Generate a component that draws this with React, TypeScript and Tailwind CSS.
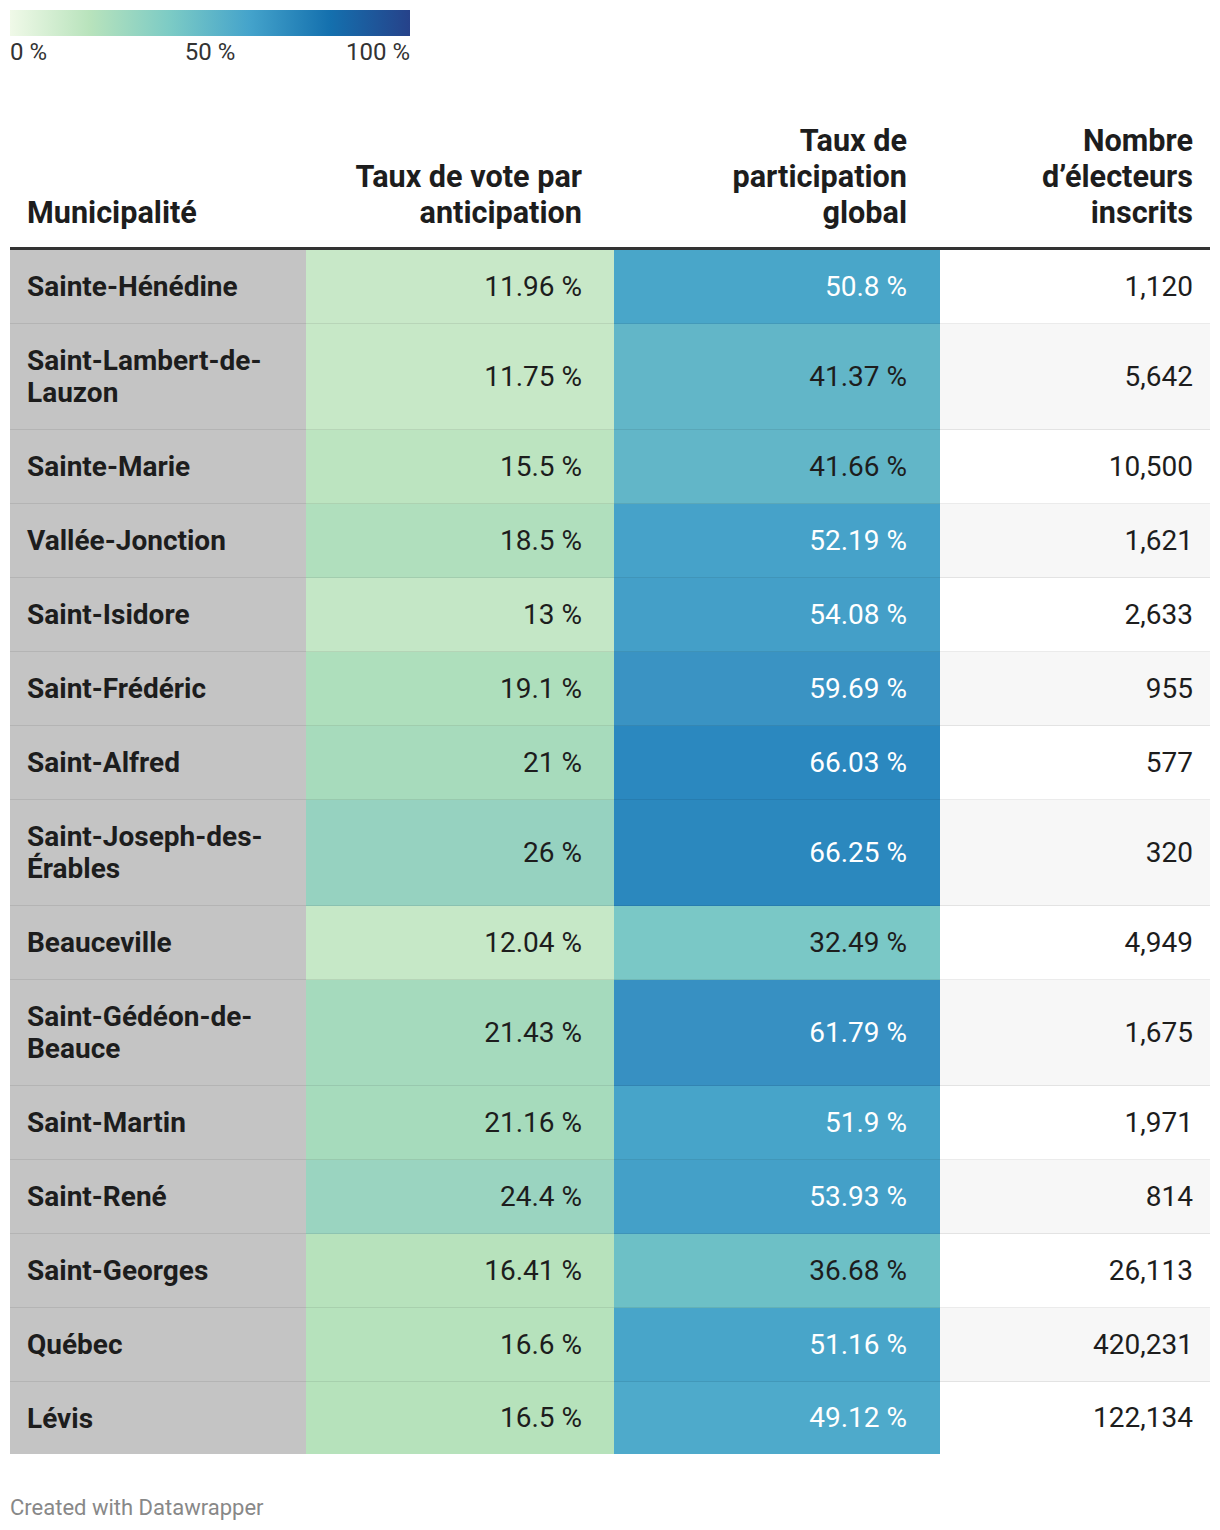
const rows = [
  { name: 'Sainte-Hénédine', vote: '11.96 %', voteBg: 'bg-[#c8e8c8]', part: '50.8 %', partBg: 'bg-[#49a6c9]', light: true, n: '1,120' },
  { name: 'Saint-Lambert-de-\nLauzon', vote: '11.75 %', voteBg: 'bg-[#c7e8c7]', part: '41.37 %', partBg: 'bg-[#62b6c8]', light: false, n: '5,642' },
  { name: 'Sainte-Marie', vote: '15.5 %', voteBg: 'bg-[#bce4c0]', part: '41.66 %', partBg: 'bg-[#62b6c8]', light: false, n: '10,500' },
  { name: 'Vallée-Jonction', vote: '18.5 %', voteBg: 'bg-[#b0dfbd]', part: '52.19 %', partBg: 'bg-[#46a2c9]', light: true, n: '1,621' },
  { name: 'Saint-Isidore', vote: '13 %', voteBg: 'bg-[#c4e7c6]', part: '54.08 %', partBg: 'bg-[#449fc8]', light: true, n: '2,633' },
  { name: 'Saint-Frédéric', vote: '19.1 %', voteBg: 'bg-[#aedfbc]', part: '59.69 %', partBg: 'bg-[#3a93c3]', light: true, n: '955' },
  { name: 'Saint-Alfred', vote: '21 %', voteBg: 'bg-[#a7dbbc]', part: '66.03 %', partBg: 'bg-[#2b88bf]', light: true, n: '577' },
  { name: 'Saint-Joseph-des-\nÉrables', vote: '26 %', voteBg: 'bg-[#96d2c0]', part: '66.25 %', partBg: 'bg-[#2b88be]', light: true, n: '320' },
  { name: 'Beauceville', vote: '12.04 %', voteBg: 'bg-[#c6e8c7]', part: '32.49 %', partBg: 'bg-[#7ac8c6]', light: false, n: '4,949' },
  { name: 'Saint-Gédéon-de-\nBeauce', vote: '21.43 %', voteBg: 'bg-[#a5dabd]', part: '61.79 %', partBg: 'bg-[#3790c2]', light: true, n: '1,675' },
  { name: 'Saint-Martin', vote: '21.16 %', voteBg: 'bg-[#a6dbbc]', part: '51.9 %', partBg: 'bg-[#47a4c9]', light: true, n: '1,971' },
  { name: 'Saint-René', vote: '24.4 %', voteBg: 'bg-[#9ad4c0]', part: '53.93 %', partBg: 'bg-[#44a0c8]', light: true, n: '814' },
  { name: 'Saint-Georges', vote: '16.41 %', voteBg: 'bg-[#b7e2bc]', part: '36.68 %', partBg: 'bg-[#6dc0c6]', light: false, n: '26,113' },
  { name: 'Québec', vote: '16.6 %', voteBg: 'bg-[#b6e2bc]', part: '51.16 %', partBg: 'bg-[#48a5c9]', light: true, n: '420,231' },
  { name: 'Lévis', vote: '16.5 %', voteBg: 'bg-[#b6e2bb]', part: '49.12 %', partBg: 'bg-[#4eaacb]', light: true, n: '122,134' },
]

export default function App() {
  return (
    <div className="min-h-screen bg-white px-[10px] pt-[10px] font-['Roboto','Liberation_Sans',sans-serif] text-[#1d1d1d]">
      {/* legend */}
      <div className="w-[400px]">
        <div className="h-[26px] bg-[linear-gradient(to_right,#f0f9e8_0%,#b8e3bc_20%,#7ccbc5_40%,#44a3cb_60%,#1470ae_80%,#26428a_100%)]" />
        <div className="mt-[2px] grid grid-cols-3 text-[24px] leading-[28px] text-[#333]">
          <span className="text-left">0 %</span>
          <span className="text-center">50 %</span>
          <span className="text-right">100 %</span>
        </div>
      </div>

      {/* table */}
      <div className="mt-[57px] w-[1200px]">
        <div className="flex items-end border-b-[3px] border-[#333] pb-[16px] text-[30.6px] font-bold leading-[36px]">
          <div className="w-[296px] pl-[17px]">Municipalité</div>
          <div className="w-[308px] pr-[32px] text-right">
            Taux de vote par
            <br />
            anticipation
          </div>
          <div className="w-[326px] pr-[33px] text-right">
            Taux de
            <br />
            participation
            <br />
            global
          </div>
          <div className="w-[270px] pr-[17px] text-right">
            Nombre
            <br />
            d’électeurs
            <br />
            inscrits
          </div>
        </div>

        {rows.map((r, i) => {
          const last = i === rows.length - 1
          return (
            <div key={r.name} className="flex items-stretch text-[28px] leading-[32px]">
              <div
                className={`w-[296px] bg-[#c4c4c4] pl-[17px] pt-[21px] font-bold whitespace-pre-line ${
                  last ? 'pb-[19px]' : 'border-b border-[#00000014] pb-[20px]'
                }`}
              >
                {r.name}
              </div>
              <div
                className={`flex w-[308px] items-center justify-end pr-[32px] ${r.voteBg} ${
                  last ? '' : 'border-b border-[#00000014]'
                }`}
              >
                {r.vote}
              </div>
              <div
                className={`flex w-[326px] items-center justify-end pr-[33px] ${r.partBg} ${
                  r.light ? 'text-white' : 'text-[#1d1d1d]'
                } ${last ? '' : 'border-b border-[#00000014]'}`}
              >
                {r.part}
              </div>
              <div
                className={`flex w-[270px] items-center justify-end pr-[17px] ${
                  i % 2 === 1 ? 'bg-[#f7f7f7]' : 'bg-white'
                } ${last ? '' : 'border-b border-[#00000014]'}`}
              >
                {r.n}
              </div>
            </div>
          )
        })}
      </div>

      <div className="mt-[41px] pb-[10px] text-[22px] leading-[26px] text-[#888]">Created with Datawrapper</div>
    </div>
  )
}
